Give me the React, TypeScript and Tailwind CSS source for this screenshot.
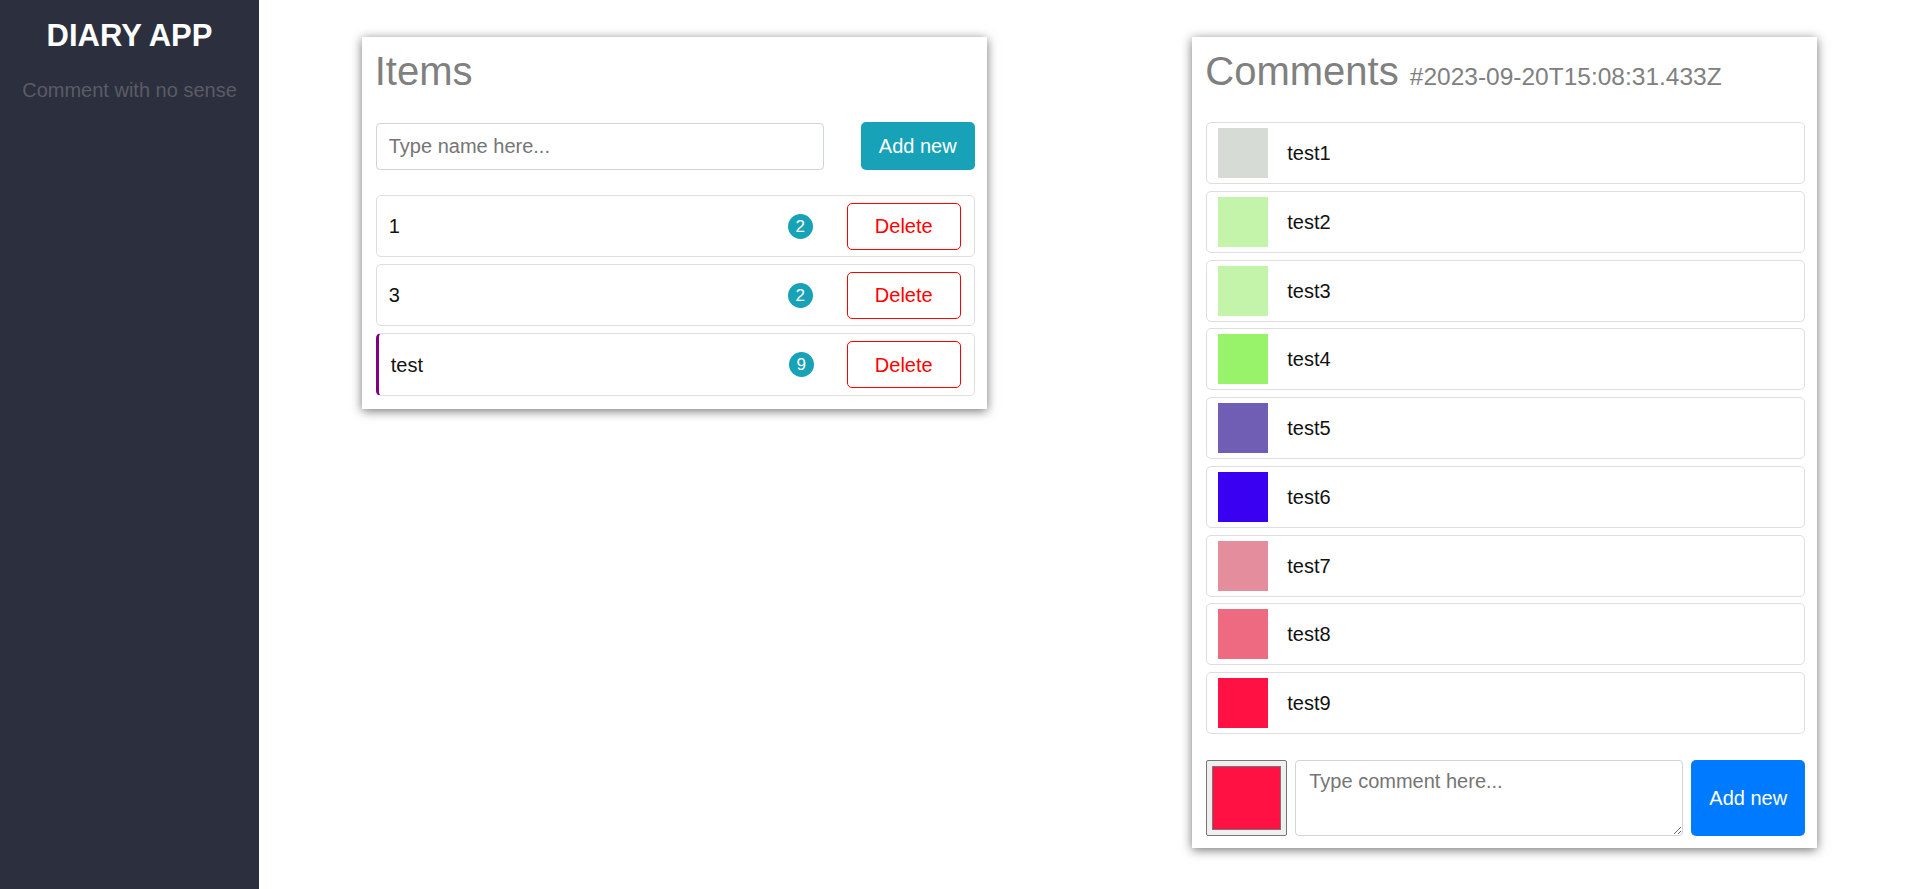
import React from "react";

const items = [
  { name: "1", count: 2, selected: false },
  { name: "3", count: 2, selected: false },
  { name: "test", count: 9, selected: true },
];

const comments = [
  { text: "test1", color: "bg-[#d7dbd5]" },
  { text: "test2", color: "bg-[#c3f4a9]" },
  { text: "test3", color: "bg-[#c3f4a9]" },
  { text: "test4", color: "bg-[#99f36a]" },
  { text: "test5", color: "bg-[#705eb4]" },
  { text: "test6", color: "bg-[#3a00f2]" },
  { text: "test7", color: "bg-[#e38d9d]" },
  { text: "test8", color: "bg-[#ee6a80]" },
  { text: "test9", color: "bg-[#ff1243]" },
];

export default function App() {
  return (
    <div className="flex min-h-[889px] w-full font-['Liberation_Sans',Arial,sans-serif] bg-white">
      <aside className="w-[259px] shrink-0 bg-[#2c2f3e] pt-[18px] text-center">
        <h1 className="text-[31px] leading-[36px] font-bold text-white">DIARY APP</h1>
        <p className="mt-[21px] text-[20px] leading-[30px] text-[#5a5c65]">Comment with no sense</p>
      </aside>

      <main className="flex-1 grid grid-cols-2">
        <div className="flex justify-center items-start pt-[37px]">
          <section className="w-[625px] bg-white shadow-[0_2px_10px_rgba(0,0,0,0.55)] pt-[10px] pb-[13px] pl-[14px] pr-[12px]">
            <h2 className="text-[40px] leading-[48px] text-[#808080] -ml-[1px]">Items</h2>
            <div className="mt-[27px] flex items-center justify-between">
              <input
                type="text"
                placeholder="Type name here..."
                className="w-[448px] h-[47px] border border-[#ced4da] rounded-[4px] px-[12px] text-[20px] text-[#495057] placeholder:text-[#757575] bg-white outline-none"
              />
              <button className="w-[114px] h-[48px] rounded-[5px] bg-[#17a2b8] text-white text-[20px]">Add new</button>
            </div>
            <div className="mt-[25px] flex flex-col gap-[7px]">
              {items.map((it) => (
                <div
                  key={it.name}
                  className={
                    it.selected
                      ? "flex items-center h-[63px] border border-[#dedede] border-l-[3px] border-l-[#800080] rounded-[5px] pl-[12px] pr-[13px]"
                      : "flex items-center h-[62px] border border-[#dedede] rounded-[5px] pl-[12px] pr-[13px]"
                  }
                >
                  <span className="flex-1 text-[20px] text-[#111]">{it.name}</span>
                  <span
                    className={
                      it.selected
                        ? "w-[25px] h-[25px] rounded-full bg-[#17a2b8] text-white text-[17px] leading-[25px] text-center mr-[-1px]"
                        : "w-[25px] h-[25px] rounded-full bg-[#17a2b8] text-white text-[17px] leading-[25px] text-center"
                    }
                  >
                    {it.count}
                  </span>
                  <button className="ml-[34px] w-[114px] h-[47px] border border-[#ff0000] rounded-[5px] text-[#ff0000] text-[20px] bg-white">
                    Delete
                  </button>
                </div>
              ))}
            </div>
          </section>
        </div>

        <div className="flex justify-center items-start pt-[37px]">
          <section className="w-[625px] bg-white shadow-[0_2px_10px_rgba(0,0,0,0.55)] pt-[10px] pb-[12px] pl-[14px] pr-[12px]">
            <h2 className="text-[40px] leading-[48px] text-[#808080] -ml-[1px]">
              Comments <span className="text-[24.5px] leading-none">#2023-09-20T15:08:31.433Z</span>
            </h2>
            <div className="mt-[27px] flex flex-col gap-[6.75px]">
              {comments.map((c) => (
                <div key={c.text} className="flex items-center h-[62px] border border-[#dedede] rounded-[5px] pl-[11px]">
                  <div className={"w-[50px] h-[50px] " + c.color} />
                  <span className="ml-[19px] text-[20px] text-[#111]">{c.text}</span>
                </div>
              ))}
            </div>
            <div className="mt-[26px] flex items-stretch gap-[8px] h-[76px]">
              <div className="w-[81px] h-[76px] bg-[#efefef] border border-[#767676] rounded-[2px] p-[5px]">
                <div className="w-full h-full bg-[#ff1243] border border-[#777777]" />
              </div>
              <textarea
                placeholder="Type comment here..."
                className="flex-1 h-[76px] border border-[#ced4da] rounded-[4px] pl-[13px] pt-[5px] text-[20px] leading-[30px] text-[#495057] placeholder:text-[#757575] bg-white outline-none"
              />
              <button className="w-[114px] h-[76px] rounded-[5px] bg-[#007bff] text-white text-[20px]">Add new</button>
            </div>
          </section>
        </div>
      </main>
    </div>
  );
}
